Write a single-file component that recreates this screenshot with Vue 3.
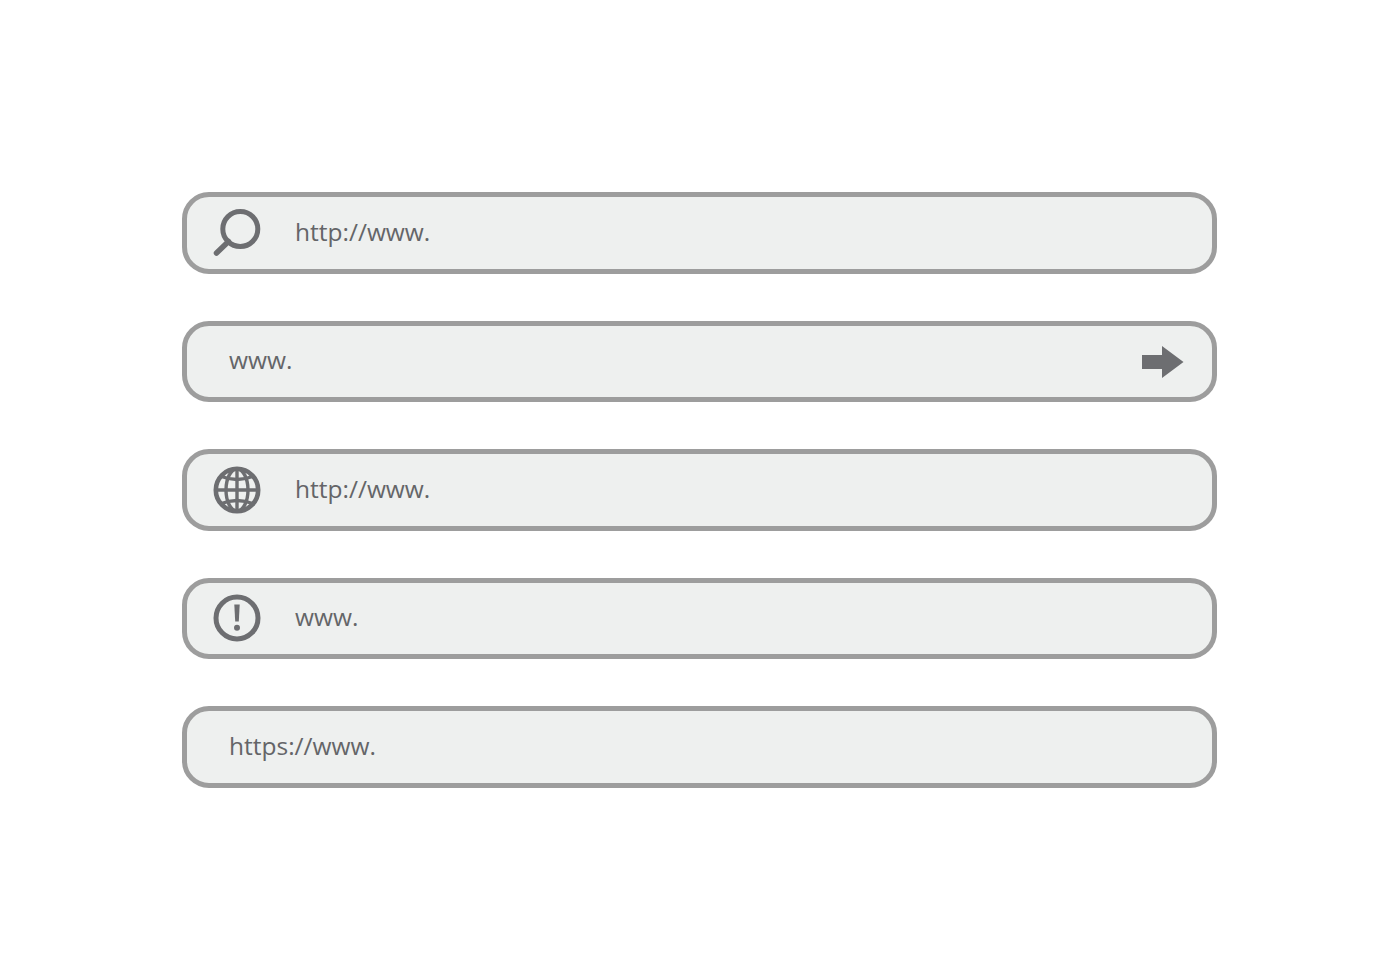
<template>
  <div class="page">
    <div v-for="bar in bars" :key="bar.text + bar.icon" class="bar">
      <span v-if="bar.icon !== 'none' && bar.icon !== 'arrow'" class="icon">
        <svg v-if="bar.icon === 'search'" width="48" height="48" viewBox="0 0 48 48">
          <circle cx="27.3" cy="20" r="17.5" fill="none" stroke="#6d6e71" stroke-width="5" />
          <path d="M15.500 32.500 L3.500 44" fill="none" stroke="#6d6e71" stroke-width="5.500" stroke-linecap="round" />
        </svg>
        <svg v-else-if="bar.icon === 'globe'" width="48" height="48" viewBox="0 0 48 48">
          <g fill="none" stroke="#6d6e71">
            <circle cx="24" cy="24" r="21.200" stroke-width="4.600" />
            <ellipse cx="24" cy="24" rx="11" ry="21" stroke-width="3.400" />
            <path d="M24 3V45M3 24H45" stroke-width="3.400" />
            <path d="M7 10Q24 17 41 10M7 38Q24 31 41 38" stroke-width="3.400" />
          </g>
        </svg>
        <svg v-else width="48" height="48" viewBox="0 0 48 48">
          <circle cx="24" cy="24" r="21" fill="none" stroke="#6d6e71" stroke-width="5" />
          <path d="M21.300 10.500H26.700L25.800 27.500H22.200Z" fill="#6d6e71" />
          <circle cx="24" cy="33.700" r="3" fill="#6d6e71" />
        </svg>
      </span>
      <span class="label" :class="{ plain: bar.icon === 'none' || bar.icon === 'arrow' }">{{ bar.text }}</span>
      <svg v-if="bar.icon === 'arrow'" class="arrow" width="42" height="32" viewBox="0 0 42 32">
        <path d="M0 9H20V0L41.500 16L20 32V23H0Z" fill="#6d6e71" />
      </svg>
    </div>
  </div>
</template>

<script setup>
const bars = [
  { icon: 'search', text: 'http://www.' },
  { icon: 'arrow', text: 'www.' },
  { icon: 'globe', text: 'http://www.' },
  { icon: 'alert', text: 'www.' },
  { icon: 'none', text: 'https://www.' },
];
</script>

<style scoped>
.page {
  display: flex;
  flex-direction: column;
  gap: 47px;
  box-sizing: border-box;
  width: 1400px;
  height: 980px;
  padding: 192px 183px 0 182px;
  background: #fff;
}

.bar {
  display: flex;
  align-items: center;
  box-sizing: border-box;
  width: 1035px;
  height: 81.500px;
  padding: 0 28px 0 26px;
  background: #eef0ef;
  border: 5px solid #9d9d9d;
  border-radius: 27px;
}

.icon {
  display: flex;
  width: 48px;
  height: 48px;
  margin-right: 34px;
}

.label {
  margin-bottom: 3px;
  font-family: "Open Sans", sans-serif;
  font-size: 24.500px;
  font-weight: 500;
  color: #646568;
}

.label.plain {
  margin-left: 16px;
}

.arrow {
  margin-top: 1px;
  margin-left: auto;
}
</style>

<style>
html,
body {
  background: #fff;
}
</style>
